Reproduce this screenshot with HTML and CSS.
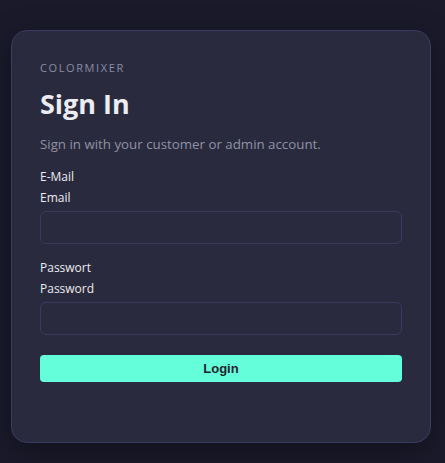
FILE: index.html
```html
<!DOCTYPE html>
<html lang="de">
<head>
<meta charset="utf-8">
<title>Sign In</title>
<link rel="stylesheet" href="styles.css">
</head>
<body>
<main class="page">
  <section class="card">
    <div class="brand">COLORMIXER</div>
    <h1 class="title">Sign In</h1>
    <p class="subtitle">Sign in with your customer or admin account.</p>
    <form class="form">
      <div class="field">
        <div class="label-de">E-Mail</div>
        <label class="label" for="email">Email</label>
        <input class="input" id="email" type="email">
      </div>
      <div class="field">
        <div class="label-de">Passwort</div>
        <label class="label" for="pw">Password</label>
        <input class="input" id="pw" type="password">
      </div>
      <button class="btn" type="button">Login</button>
    </form>
  </section>
</main>
</body>
</html>
```
FILE: styles.css
```css
html, body {
  margin: 0;
  padding: 0;
  background: #1b1a2b;
  height: 100%;
}
body {
  font-family: "Open Sans", "Noto Sans", sans-serif;
  color: #e6e6ee;
}
.page {
  padding: 30px 14px 0 11px;
}
.card {
  width: 362px;
  background: #292a3e;
  border: 1px solid #3a3a62;
  border-radius: 16px;
  padding: 28px 28px 60px 28px;
  box-shadow: 0 8px 30px rgba(0,0,0,0.35);
}
.brand {
  font-size: 11px;
  letter-spacing: 1.6px;
  color: #8b8da3;
  line-height: 16px;
  margin-top: 1px;
}
.title {
  margin: 10px 0 0;
  font-size: 27px;
  font-weight: 700;
  line-height: 36px;
  color: #ececf2;
}
.subtitle {
  margin: 12px 0 0;
  font-size: 13.3px;
  line-height: 20px;
  color: #9192a3;
}
.form {
  margin-top: 15px;
  display: flex;
  flex-direction: column;
}
.field {
  display: flex;
  flex-direction: column;
  margin-bottom: 16px;
}
.label-de, .label {
  font-size: 12px;
  line-height: 16px;
  color: #ececf0;
}
.label {
  margin-top: 5px;
  margin-bottom: 5px;
}
.input {
  height: 33px;
  box-sizing: border-box;
  background: #292a3e;
  border: 1px solid #3a3a62;
  border-radius: 6px;
  margin: 0;
}
.btn {
  margin-top: 4px;
  height: 27px;
  border: none;
  border-radius: 4px;
  background: #64ffda;
  color: #1e1f2e;
  font-family: "Liberation Sans", Arial, sans-serif;
  font-weight: 700;
  font-size: 13px;
}
```
